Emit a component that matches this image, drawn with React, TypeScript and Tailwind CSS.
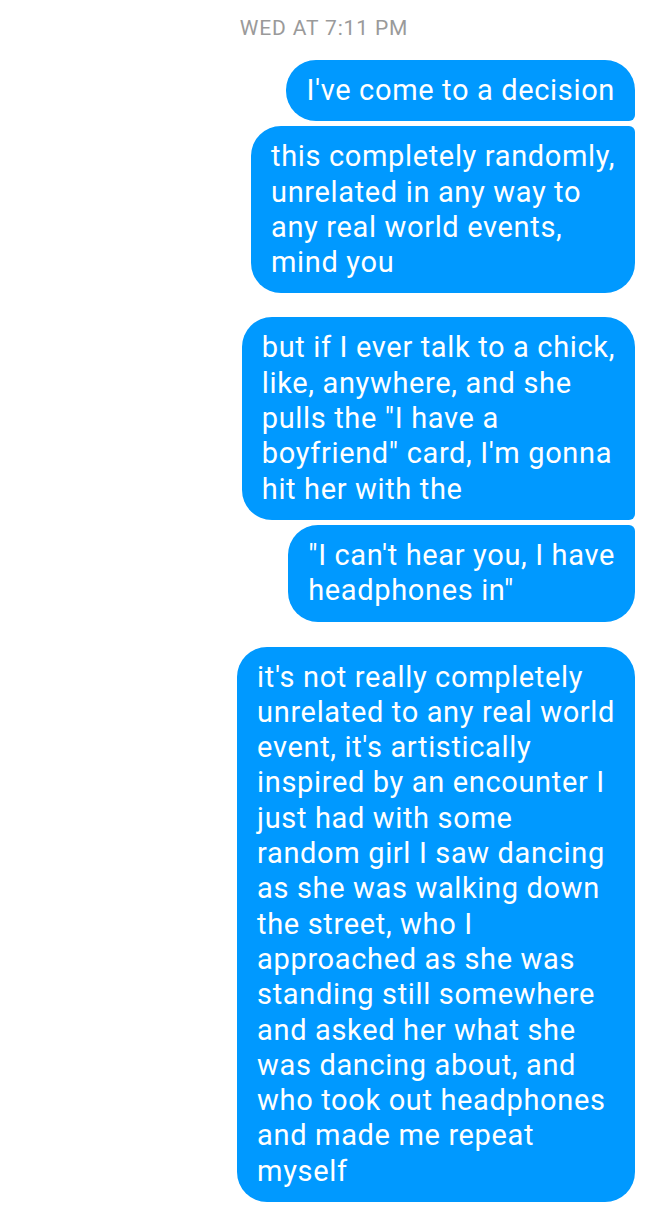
const messages: { lines: string[]; radius: string; gap: string }[] = [
  {
    lines: ["I've come to a decision"],
    radius: "rounded-l-[30px] rounded-tr-[30px] rounded-br-[6px]",
    gap: "mt-0",
  },
  {
    lines: [
      "this completely randomly,",
      "unrelated in any way to",
      "any real world events,",
      "mind you",
    ],
    radius: "rounded-l-[30px] rounded-tr-[6px] rounded-br-[30px]",
    gap: "mt-[5px]",
  },
  {
    lines: [
      "but if I ever talk to a chick,",
      "like, anywhere, and she",
      'pulls the "I have a',
      'boyfriend" card, I\'m gonna',
      "hit her with the",
    ],
    radius: "rounded-l-[30px] rounded-tr-[30px] rounded-br-[6px]",
    gap: "mt-[24px]",
  },
  {
    lines: ['"I can\'t hear you, I have', 'headphones in"'],
    radius: "rounded-l-[30px] rounded-tr-[6px] rounded-br-[30px]",
    gap: "mt-[5px]",
  },
  {
    lines: [
      "it's not really completely",
      "unrelated to any real world",
      "event, it's artistically",
      "inspired by an encounter I",
      "just had with some",
      "random girl I saw dancing",
      "as she was walking down",
      "the street, who I",
      "approached as she was",
      "standing still somewhere",
      "and asked her what she",
      "was dancing about, and",
      "who took out headphones",
      "and made me repeat",
      "myself",
    ],
    radius: "rounded-[30px]",
    gap: "mt-[25px]",
  },
];

export default function App() {
  return (
    <div className="w-[648px] h-[1225px] bg-white overflow-hidden font-['Roboto',sans-serif]">
      <div className="pt-[15px] text-center text-[21px] leading-[26px] tracking-[0.85px] text-[#9a9a9a]">
        WED AT 7:11 PM
      </div>
      <div className="mt-[19px] flex flex-col items-end pr-[13px]">
        {messages.map((m, i) => (
          <div
            key={i}
            className={`${m.gap} ${m.radius} bg-[#0099ff] text-white pl-[20px] pr-[20px] py-[13px] text-[29px] leading-[35.3px] tracking-[0.65px]`}
          >
            {m.lines.map((l, j) => (
              <div key={j} className="whitespace-nowrap">
                {l}
              </div>
            ))}
          </div>
        ))}
      </div>
    </div>
  );
}
